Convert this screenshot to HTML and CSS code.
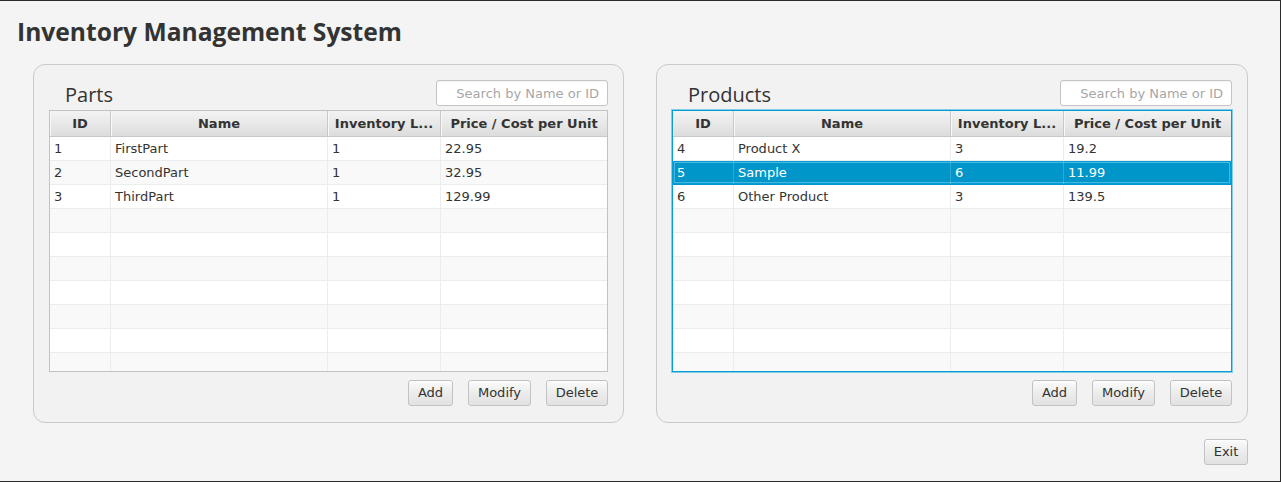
FILE: index.html
```html
<!DOCTYPE html>
<html>
<head>
<meta charset="utf-8">
<title>Inventory Management System</title>
<link rel="stylesheet" href="styles.css">
</head>
<body>
<div class="app">
  <h1 class="title">Inventory Management System</h1>
  <div class="panels">
    <section class="panel">
      <div class="panel-head">
        <span class="panel-label">Parts</span>
        <div class="search">Search by Name or ID</div>
      </div>
      <div class="table">
        <div class="thead">
          <div class="th">ID</div><div class="th">Name</div><div class="th">Inventory L...</div><div class="th">Price / Cost per Unit</div>
        </div>
        <div class="tbody">
          <div class="tr"><div class="td">1</div><div class="td">FirstPart</div><div class="td">1</div><div class="td">22.95</div></div>
          <div class="tr"><div class="td">2</div><div class="td">SecondPart</div><div class="td">1</div><div class="td">32.95</div></div>
          <div class="tr"><div class="td">3</div><div class="td">ThirdPart</div><div class="td">1</div><div class="td">129.99</div></div>
          <div class="tr"><div class="td"></div><div class="td"></div><div class="td"></div><div class="td"></div></div>
          <div class="tr"><div class="td"></div><div class="td"></div><div class="td"></div><div class="td"></div></div>
          <div class="tr"><div class="td"></div><div class="td"></div><div class="td"></div><div class="td"></div></div>
          <div class="tr"><div class="td"></div><div class="td"></div><div class="td"></div><div class="td"></div></div>
          <div class="tr"><div class="td"></div><div class="td"></div><div class="td"></div><div class="td"></div></div>
          <div class="tr"><div class="td"></div><div class="td"></div><div class="td"></div><div class="td"></div></div>
          <div class="tr"><div class="td"></div><div class="td"></div><div class="td"></div><div class="td"></div></div>
        </div>
      </div>
      <div class="actions">
        <button class="btn btn-add">Add</button><button class="btn btn-modify">Modify</button><button class="btn btn-delete">Delete</button>
      </div>
    </section>
    <section class="panel panel-wide">
      <div class="panel-head">
        <span class="panel-label">Products</span>
        <div class="search">Search by Name or ID</div>
      </div>
      <div class="table table-focused">
        <div class="thead">
          <div class="th">ID</div><div class="th">Name</div><div class="th">Inventory L...</div><div class="th">Price / Cost per Unit</div>
        </div>
        <div class="tbody">
          <div class="tr"><div class="td">4</div><div class="td">Product X</div><div class="td">3</div><div class="td">19.2</div></div>
          <div class="tr selected"><div class="td">5</div><div class="td">Sample</div><div class="td">6</div><div class="td">11.99</div></div>
          <div class="tr"><div class="td">6</div><div class="td">Other Product</div><div class="td">3</div><div class="td">139.5</div></div>
          <div class="tr"><div class="td"></div><div class="td"></div><div class="td"></div><div class="td"></div></div>
          <div class="tr"><div class="td"></div><div class="td"></div><div class="td"></div><div class="td"></div></div>
          <div class="tr"><div class="td"></div><div class="td"></div><div class="td"></div><div class="td"></div></div>
          <div class="tr"><div class="td"></div><div class="td"></div><div class="td"></div><div class="td"></div></div>
          <div class="tr"><div class="td"></div><div class="td"></div><div class="td"></div><div class="td"></div></div>
          <div class="tr"><div class="td"></div><div class="td"></div><div class="td"></div><div class="td"></div></div>
          <div class="tr"><div class="td"></div><div class="td"></div><div class="td"></div><div class="td"></div></div>
        </div>
      </div>
      <div class="actions">
        <button class="btn btn-add">Add</button><button class="btn btn-modify">Modify</button><button class="btn btn-delete">Delete</button>
      </div>
    </section>
  </div>
  <div class="footer">
    <button class="btn btn-exit">Exit</button>
  </div>
</div>
</body>
</html>
```

FILE: styles.css
```css
* { box-sizing: border-box; }
html, body { margin: 0; padding: 0; background: #f4f4f4; }
body { font-family: "DejaVu Sans", sans-serif; font-size: 13px; color: #333; }

.app {
  width: 1281px;
  height: 482px;
  border-top: 1px solid #2b2b2b;
  border-right: 1px solid #2b2b2b;
  border-bottom: 1px solid #2b2b2b;
  background: #f4f4f4;
  overflow: hidden;
}

.title {
  margin: 0;
  padding: 15px 0 0 17px;
  height: 63px;
  font-family: "Open Sans", sans-serif;
  font-weight: 700;
  font-size: 24.6px;
  line-height: 32px;
  color: #333;
}

.panels {
  display: flex;
  gap: 32px;
  padding-left: 33px;
}

.panel {
  width: 591px;
  height: 359px;
  border: 1px solid #cacaca;
  border-radius: 12px;
  background: #f2f2f2;
  padding: 15px 15px 16px 15px;
  display: flex;
  flex-direction: column;
}
.panel-wide { width: 592px; }

.panel-head {
  display: flex;
  justify-content: space-between;
  align-items: flex-start;
  height: 26px;
  margin-bottom: 4px;
}
.panel-label {
  font-family: "Open Sans", sans-serif;
  font-size: 20px;
  line-height: 26px;
  padding-left: 16px;
  padding-top: 2px;
  color: #333;
}
.search {
  width: 172px;
  height: 26px;
  border: 1px solid #c4c4c4;
  border-radius: 3px;
  background: #fff;
  color: #a7a7a7;
  text-align: right;
  padding-right: 8px;
  line-height: 25px;
  box-shadow: inset 0 1px 1px rgba(0,0,0,0.04);
}

.table {
  height: 262px;
  border: 1px solid #c2c2c2;
  background: #fff;
  overflow: hidden;
}
.table-focused {
  border-color: #039ed3;
  box-shadow: 0 0 0 1px rgba(3,158,211,0.45);
}

.thead, .tr {
  display: grid;
  grid-template-columns: 61px 217px 113px 1fr;
}
.thead {
  height: 26px;
  border-bottom: 1px solid #c8c8c8;
  background: linear-gradient(to bottom, #f3f3f3 0%, #e6e6e6 60%, #dcdcdc 100%);
}
.th {
  font-weight: 700;
  text-align: center;
  line-height: 25px;
  border-right: 1px solid #c8c8c8;
  box-shadow: inset 1px 0 0 #f8f8f8;
  white-space: nowrap;
  overflow: hidden;
}
.th:last-child { border-right: none; }

.tbody { height: 234px; overflow: hidden; }
.tr { height: 24px; border-bottom: 1px solid #ececec; background: #fff; }
.tr:nth-child(even) { background: #f9f9f9; }
.td {
  border-right: 1px solid #ececec;
  padding-left: 4px;
  line-height: 23px;
  white-space: nowrap;
  overflow: hidden;
}
.td:last-child { border-right: none; }

.tr.selected {
  background: #0096c9;
  color: #fff;
  box-shadow: inset 0 0 0 1px #039ed3, inset 0 0 0 2px #45b8e0;
  border-bottom-color: #0096c9;
}
.tr.selected .td { border-right-color: rgba(255,255,255,0.18); }

.actions {
  display: flex;
  justify-content: flex-end;
  gap: 15px;
  margin-top: 8px;
}

.btn {
  font-family: "DejaVu Sans", sans-serif;
  font-size: 13px;
  color: #333;
  height: 26px;
  padding: 0;
  border: 1px solid #c2c2c2;
  border-radius: 3px;
  background: linear-gradient(to bottom, #fbfbfb 0%, #ececec 50%, #e2e2e2 100%);
  box-shadow: inset 0 1px 0 #ffffff;
  line-height: 24px;
  margin: 0;
  text-align: center;
  cursor: default;
}
.btn-add { width: 45px; }
.btn-modify { width: 63px; }
.btn-delete { width: 62px; }
.btn-exit { width: 44px; }

.footer {
  display: flex;
  justify-content: flex-end;
  padding-right: 32px;
  margin-top: 16px;
}
```
